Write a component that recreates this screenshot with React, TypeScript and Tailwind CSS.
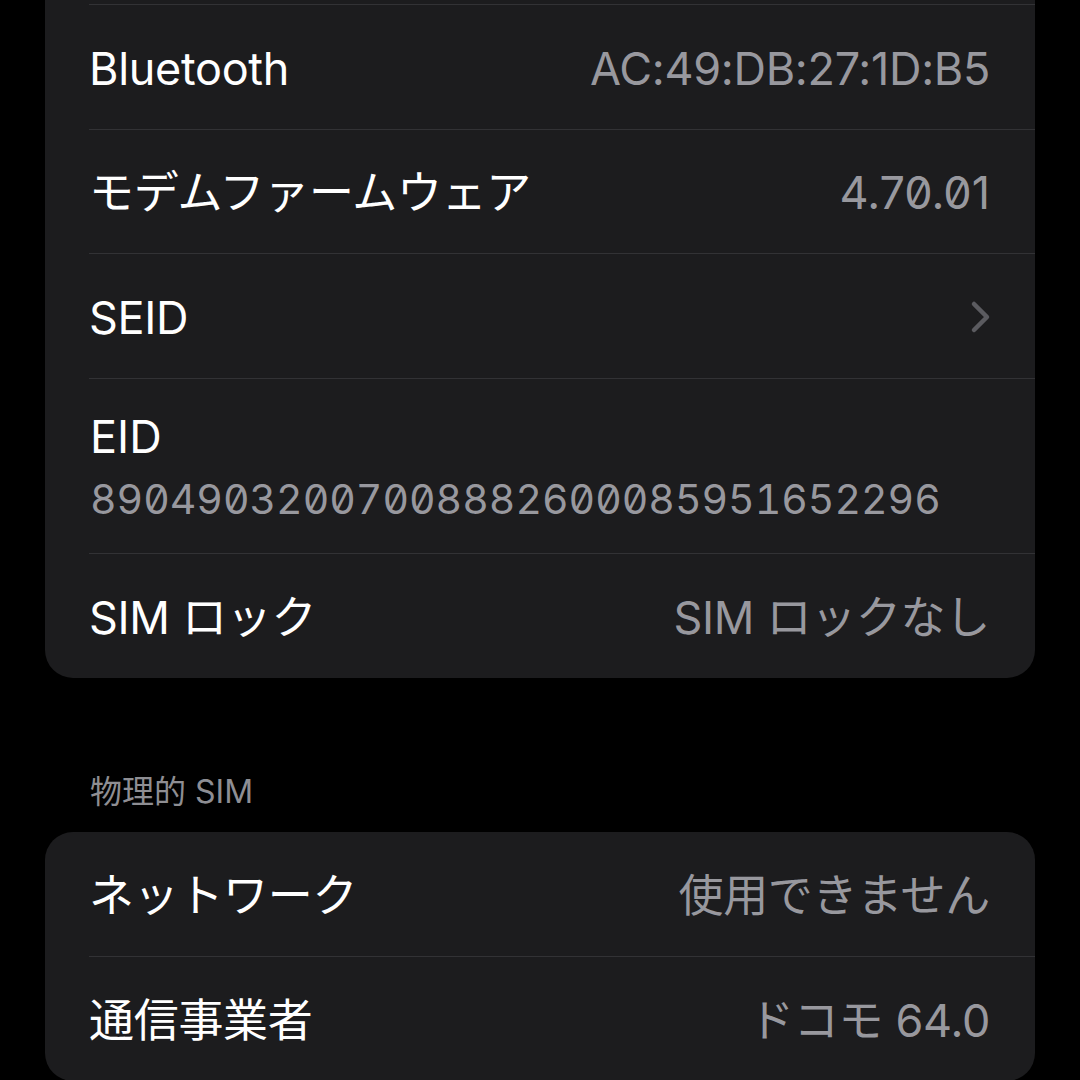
const font = "font-['Inter','Noto_Sans_CJK_JP',sans-serif]";

type RowProps = {
  label: string;
  value?: string;
  chevron?: boolean;
  last?: boolean;
  mono?: boolean;
};

function Row({ label, value, chevron, last, mono }: RowProps) {
  return (
    <div
      className={`flex h-[124.5px] items-center justify-between pr-[45px] pt-[3px] ${
        last ? "" : "border-b-[1.5px] border-[#323235]"
      }`}
    >
      <span className="text-[45px] leading-none tracking-[-0.3px] text-white">{label}</span>
      {value && (
        <span
          className={`text-[45px] leading-none text-[#98989e] ${
            mono ? "[font-feature-settings:'zero']" : "tracking-[-0.3px]"
          }`}
        >
          {value}
        </span>
      )}
      {chevron && (
        <svg width="22" height="34" viewBox="0 0 22 34" className="mr-[-2px]">
          <path
            d="M4 4 L17 17 L4 30"
            fill="none"
            stroke="#5b5b60"
            strokeWidth="4.5"
            strokeLinecap="round"
            strokeLinejoin="round"
          />
        </svg>
      )}
    </div>
  );
}

export default function App() {
  return (
    <div className={`h-[1080px] w-[1080px] overflow-hidden bg-black ${font}`}>
      <div className="mx-[45px] rounded-b-[28px] bg-[#1c1c1e] pl-[44px]">
        <div className="h-[5px] border-b-[1.5px] border-[#323235]" />
        <Row label="Bluetooth" value="AC:49:DB:27:1D:B5" />
        <Row label="モデムファームウェア" value="4.70.01" mono />
        <Row label="SEID" chevron />
        <div className="flex h-[175px] flex-col justify-center gap-[20px] border-b-[1.5px] border-[#323235] pl-[1px] pt-[3px]">
          <span className="text-[45px] leading-none text-white">EID</span>
          <span className="text-[41px] leading-none text-[#98989e] [font-feature-settings:'zero','tnum']">
            89049032007008882600085951652296
          </span>
        </div>
        <Row label="SIM ロック" value="SIM ロックなし" last />
      </div>

      <div className="px-[90px] pb-[20px] pt-[94px] text-[32px] leading-[40px] text-[#8e8e93]">
        物理的 SIM
      </div>

      <div className="mx-[45px] rounded-[28px] bg-[#1c1c1e] pl-[44px]">
        <Row label="ネットワーク" value="使用できません" />
        <Row label="通信事業者" value="ドコモ 64.0" last />
      </div>
    </div>
  );
}
